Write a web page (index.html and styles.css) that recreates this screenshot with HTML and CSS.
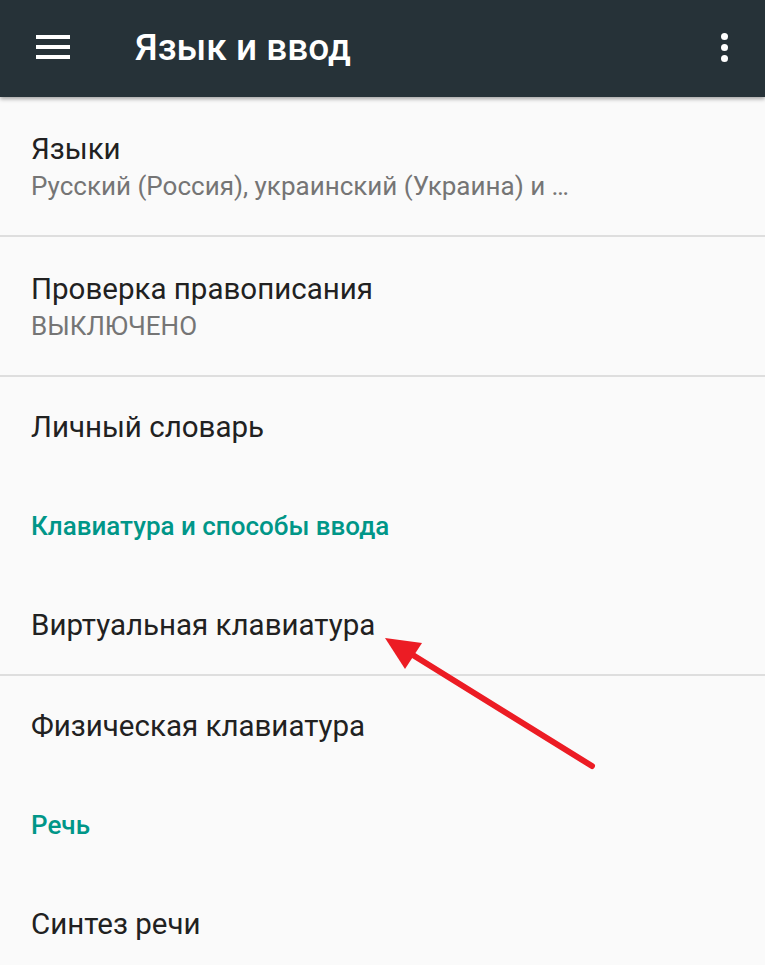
FILE: index.html
```html
<!DOCTYPE html>
<html lang="ru">
<head>
    <meta charset="UTF-8">
    <meta name="viewport" content="width=device-width, initial-scale=1.0">
    <title>Язык и ввод</title>
    <link rel="stylesheet" href="styles.css">
</head>
<body>
    <div class="toolbar">
        <div class="menu-icon">
            <span></span>
            <span></span>
            <span></span>
        </div>
        <div class="toolbar-title">Язык и ввод</div>
        <div class="more-icon">
            <span></span>
            <span></span>
            <span></span>
        </div>
    </div>

    <div class="list">
        <div class="item two-line">
            <div class="item-title">Языки</div>
            <div class="item-summary">Русский (Россия), украинский (Украина) и …</div>
        </div>
        <div class="divider"></div>

        <div class="item two-line">
            <div class="item-title">Проверка правописания</div>
            <div class="item-summary">ВЫКЛЮЧЕНО</div>
        </div>
        <div class="divider"></div>

        <div class="item">
            <div class="item-title">Личный словарь</div>
        </div>

        <div class="category">Клавиатура и способы ввода</div>

        <div class="item">
            <div class="item-title">Виртуальная клавиатура</div>
        </div>
        <div class="divider"></div>

        <div class="item">
            <div class="item-title">Физическая клавиатура</div>
        </div>

        <div class="category">Речь</div>

        <div class="item">
            <div class="item-title">Синтез речи</div>
        </div>
    </div>

    <!-- red pointer drawn over the list -->
    <svg class="pointer" width="765" height="965" viewBox="0 0 765 965">
        <line x1="592" y1="766" x2="408" y2="652" stroke="#ec1c24" stroke-width="6" stroke-linecap="round"/>
        <polygon points="385,638 422,643 405,669" fill="#ec1c24"/>
    </svg>
</body>
</html>
```

FILE: styles.css
```css
body {
    margin: 0;
    background-color: #fafafa;
    font-family: Roboto, "Liberation Sans", sans-serif;
    position: relative;
    overflow: hidden;
    height: 965px;
}

.toolbar {
    display: flex;
    align-items: center;
    height: 97px;
    background-color: #263238;
    box-shadow: 0 2px 4px rgba(0, 0, 0, 0.35);
    position: relative;
    z-index: 1;
}

.menu-icon {
    display: flex;
    flex-direction: column;
    gap: 6px;
    width: 34px;
    margin-left: 36px;
    margin-top: -3px;
}

.menu-icon span {
    display: block;
    height: 4px;
    background-color: #fff;
}

.toolbar-title {
    flex: 1;
    margin-left: 65px;
    margin-top: -3px;
    color: #fff;
    font-size: 37px;
    font-weight: 500;
}

.more-icon {
    display: flex;
    flex-direction: column;
    gap: 4px;
    margin-right: 37px;
    margin-top: -3px;
}

.more-icon span {
    display: block;
    width: 7px;
    height: 7px;
    border-radius: 50%;
    background-color: #fff;
}

.item {
    display: flex;
    flex-direction: column;
    justify-content: center;
    height: 99px;
    padding-left: 31px;
}

.item.two-line {
    height: 138px;
    gap: 5px;
}

.item-title {
    font-size: 29.5px;
    color: #212121;
}

.item-summary {
    font-size: 26px;
    color: #757575;
}

.divider {
    height: 2px;
    background-color: #dedede;
}

.category {
    display: flex;
    align-items: center;
    height: 99px;
    padding-left: 31px;
    font-size: 26px;
    font-weight: 500;
    color: #009688;
}

.pointer {
    position: absolute;
    top: 0;
    left: 0;
    pointer-events: none;
}
```
